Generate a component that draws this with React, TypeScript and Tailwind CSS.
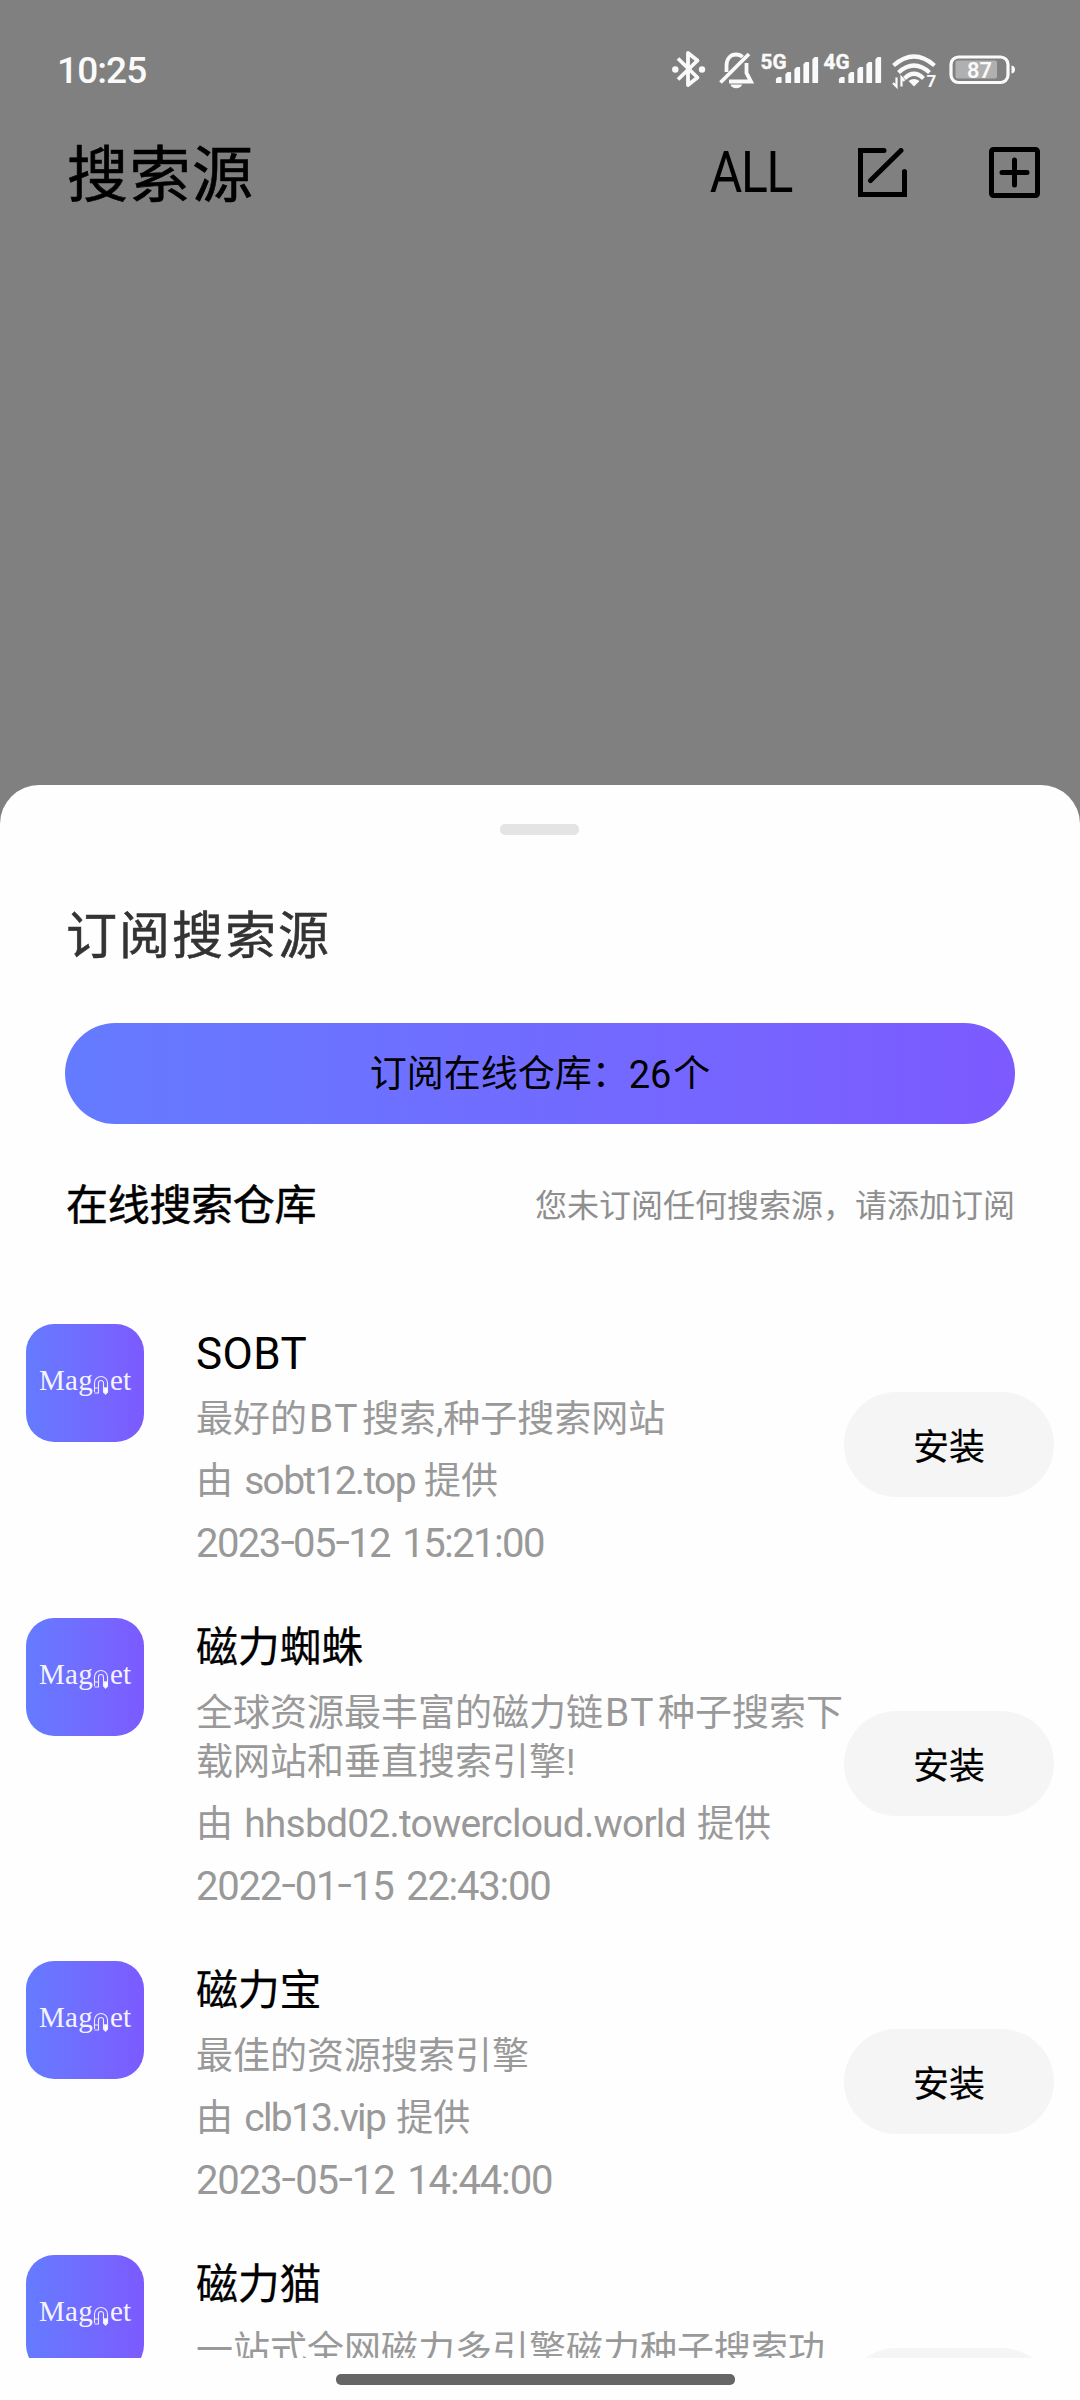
import type { ReactNode } from "react";

type Source = {
  name: string;
  nameClass: string;
  height: string;
  lines: ReactNode[];
  from?: string;
  fromClass?: string;
  date?: string;
  dateClass?: string;
};

const BT = () => <span className="ml-[2px] mr-[3px] text-[39px] tracking-[1.500px]">BT</span>;

const CJK_NAME = "text-[42px] tracking-[-0.200px] [-webkit-text-stroke:0.25px_black]";

const sources: Source[] = [
  {
    name: "SOBT",
    nameClass: "text-[44px] tracking-[0.400px]",
    height: "h-[242px]",
    lines: [<>最好的<BT />搜索,种子搜索网站</>],
    from: "sobt12.top",
    fromClass: "tracking-[-1.700px]",
    date: "2023-05-12 15:21:00",
    dateClass: "tracking-[-1.600px] [word-spacing:4px]",
  },
  {
    name: "磁力蜘蛛",
    nameClass: CJK_NAME,
    height: "h-[291px]",
    lines: [<>全球资源最丰富的磁力链<BT />种子搜索下</>, <>载网站和垂直搜索引擎!</>],
    from: "hhsbd02.towercloud.world",
    fromClass: "mr-[2px] tracking-[-0.800px]",
    date: "2022-01-15 22:43:00",
    dateClass: "tracking-[-1.250px] [word-spacing:4px]",
  },
  {
    name: "磁力宝",
    nameClass: CJK_NAME,
    height: "h-[242px]",
    lines: [<>最佳的资源搜索引擎</>],
    from: "clb13.vip",
    fromClass: "mr-[2px] tracking-[-1.700px]",
    date: "2023-05-12 14:44:00",
    dateClass: "tracking-[-1.150px] [word-spacing:4px]",
  },
  {
    name: "磁力猫",
    nameClass: CJK_NAME,
    height: "h-[291px]",
    lines: [<>一站式全网磁力多引擎磁力种子搜索功</>],
  },
];

function StatusIcons() {
  return (
    <svg className="h-[60px] w-[360px]" viewBox="0 0 360 60" fill="none" stroke="#fafafa">
      {/* bluetooth */}
      <path d="M18 18.500L37.500 37.500L28 45V13L37.500 20.500L18 39.500" strokeWidth="3.800" strokeLinejoin="round" />
      <circle cx="15.300" cy="29.500" r="3.200" fill="#fafafa" stroke="none" />
      <circle cx="42" cy="29.500" r="3.200" fill="#fafafa" stroke="none" />
      {/* muted bell */}
      <path d="M66.500 32V26C66.500 18 71 14.500 76 14.500C79 14.500 81 15.500 82.500 17M86.500 23V33L91 41.500H69M60.500 42.500L89 14" strokeWidth="3.800" />
      <path d="M70.500 44.500H82C81 49.500 71.500 49.500 70.500 44.500Z" fill="#fafafa" stroke="none" />
      {/* signal bars */}
      {[0, 63].map((x) => (
        <g key={x} transform={`translate(${x} 0)`} fill="#fafafa" stroke="#fafafa" strokeWidth="1.200" strokeLinejoin="round">
          <path d="M116.500 39L118.500 37.500H121V42.500H116.500ZM126 34.500L128 32.500H130.500V42.500H126ZM135 29.500L137 27.500H139.500V42.500H135ZM144 24.500L146 22.500H148.500V42.500H144ZM153 19.500L155 17.500H157.500V42.500H153Z" />
          <text x="100.500" y="28.500" fontFamily="Roboto" fontWeight="700" fontSize="20" strokeWidth="0.400" textLength="26" lengthAdjust="spacingAndGlyphs">
            {x === 0 ? "5G" : "4G"}
          </text>
        </g>
      ))}
      {/* wi-fi */}
      <path d="M233.500 25.500Q254 7.500 274.500 25.500M238.500 32.500Q254 18.500 269.500 32.500M244.500 38.500Q254 29 263.500 38.500" strokeWidth="4.200" />
      <path d="M248.500 41Q254 37 259.500 41L254 46.500Z" fill="#fafafa" stroke="none" />
      <path d="M236.500 37.500V46.500L233 43M241.500 46.500V37.500L244.500 41" strokeWidth="2.200" />
      <text x="266.500" y="46.500" fontFamily="Roboto" fontWeight="700" fontSize="17" fill="#fafafa" stroke="none">7</text>
      {/* battery */}
      <rect x="291" y="17" width="57" height="25.500" rx="7.500" strokeWidth="3.200" />
      <rect x="295.500" y="20.500" width="41.500" height="18" rx="2" fill="#b0b0b0" stroke="none" />
      <path d="M351.500 25.500Q355 26 355 29.500T351.500 33.500Z" fill="#fafafa" stroke="none" />
      <text x="307" y="37.500" fontFamily="Roboto" fontWeight="600" fontSize="22.500" fill="#fafafa" stroke="none" textLength="25" lengthAdjust="spacingAndGlyphs">87</text>
    </svg>
  );
}

function Logo() {
  return (
    <div className="flex h-[118px] w-[118px] shrink-0 items-center justify-center rounded-[28px] bg-linear-to-r from-[#647bff] to-[#7c5aff] pb-[5px] font-['Liberation_Serif'] text-[29px] leading-none text-[#f4f4ff]">
      <span className="tracking-[0.300px]">Mag</span>
      <svg className="mt-[8px] h-[20px] w-[16px]" viewBox="0 0 16 20" fill="none" stroke="#eeeeff" strokeWidth="1.100">
        <path d="M1.500 17V8A6.500 6.500 0 0 1 14.500 8V17L12.500 19L10.500 17V8A2.500 2.500 0 0 0 5.500 8V18H1.500M1.500 13H5.500M10.500 13H14.500" />
        <path d="M11 13H14.500V17L12.500 19L11 17Z" fill="white" />
      </svg>
      <span className="ml-px">et</span>
    </div>
  );
}

/** Date text whose hyphens sit at mid-digit height. */
function Stamp({ value, className }: { value: string; className?: string }) {
  const parts = value.split("-");
  return (
    <p className={`h-[49px] text-[40px] ${className ?? ""}`}>
      {parts.map((part, i) => (
        <span key={i}>
          {i > 0 && <span className="mx-[2px] inline-block -translate-y-[2px] scale-x-[1.300]">-</span>}
          {part}
        </span>
      ))}
    </p>
  );
}

function SourceRow({ source }: { source: Source }) {
  return (
    <div className={`mb-[52px] flex shrink-0 px-[26px] ${source.height}`}>
      <Logo />
      <div className="ml-[52px] flex w-[648px] shrink-0 flex-col gap-[13px] whitespace-nowrap pt-[2px] text-[37px] leading-[49px] text-[#999]">
        <h3 className={`h-[56px] leading-[56px] text-black ${source.nameClass}`}>{source.name}</h3>
        <p>
          {source.lines.map((line, i) => (
            <span key={i} className="block h-[49px]">{line}</span>
          ))}
        </p>
        {source.from && (
          <p className="h-[49px]">
            由 <span className={`ml-[2px] text-[39px] ${source.fromClass}`}>{source.from}</span> 提供
          </p>
        )}
        {source.date && <Stamp value={source.date} className={source.dateClass} />}
      </div>
      <button className="-mt-px h-[105px] w-[210px] shrink-0 self-center rounded-full bg-[#f5f5f5] pt-[7px] text-[36px] text-black [-webkit-text-stroke:0.2px_black]">
        安装
      </button>
    </div>
  );
}

export default function App() {
  return (
    <div className="flex h-[2400px] w-[1080px] flex-col overflow-hidden bg-[#808080] font-['Roboto','Noto_Sans_CJK_SC',sans-serif] text-black">
      <div className="mt-[40px] flex h-[60px] shrink-0 items-center justify-between pl-[57px] pr-[60px]">
        <span className="pt-[1px] text-[37px] font-medium tracking-[-0.900px] text-[#fafafa]">10:25</span>
        <StatusIcons />
      </div>
      <header className="flex h-[145px] shrink-0 items-center pl-[67px] pr-[40px]">
        <h1 className="grow pt-[8px] text-[61px] tracking-[1.500px] [-webkit-text-stroke:0.6px_black]">搜索源</h1>
        <span className="origin-right translate-x-px scale-x-[0.875] text-[57px] tracking-[-1.500px]">ALL</span>
        <svg className="ml-[67px] h-[50px] w-[50px]" viewBox="0 0 50 50" fill="none" stroke="black" strokeWidth="5">
          <path d="M26 2.500H2.500V46.500H46.500V23.500M12.500 32.500L43 2.500" strokeLinecap="round" />
        </svg>
        <svg className="ml-[81px] h-[51px] w-[51px]" viewBox="0 0 51 51" fill="none" stroke="black" strokeWidth="5">
          <rect x="2.500" y="2.500" width="46" height="46" rx="2" />
          <path d="M13 25.500H38M25.500 13V38" strokeLinecap="round" />
        </svg>
      </header>
      <main className="mt-auto flex h-[1615px] shrink-0 flex-col rounded-t-[39px] bg-[#fefefe]">
        <div className="mx-auto mt-[39px] h-[11px] w-[79px] shrink-0 -translate-x-px rounded-[5px] bg-[#e4e4e4]" />
        <h2 className="mt-[62px] h-[80px] shrink-0 pl-[66px] text-[51px] leading-[80px] tracking-[2px] text-[#333] [-webkit-text-stroke:0.5px_#333]">
          订阅搜索源
        </h2>
        <button className="mx-[65px] mt-[46px] flex h-[101px] shrink-0 items-center justify-center rounded-full bg-linear-to-r from-[#647bff] via-[#716bff] to-[#7c5aff] pt-[3px] text-[37px]">
          订阅在线仓库：<span className="mr-[2px] text-[38px]">26</span>个
        </button>
        <div className="mt-[46px] flex h-[70px] shrink-0 items-center justify-between pl-[66px] pr-[65px]">
          <h2 className="pt-px text-[42px] tracking-[-0.300px] [-webkit-text-stroke:0.5px_black]">在线搜索仓库</h2>
          <p className="pt-px text-[32px] text-[#8f8f8f]">您未订阅任何搜索源，请添加订阅</p>
        </div>
        <div className="mt-[84px] flex h-[1034px] shrink-0 flex-col overflow-hidden">
          {sources.map((s) => (
            <SourceRow key={s.name} source={s} />
          ))}
        </div>
        <div className="mx-auto mt-[16px] h-[11px] w-[399px] shrink-0 -translate-x-[5px] rounded-[5px] bg-[#666]" />
      </main>
    </div>
  );
}
